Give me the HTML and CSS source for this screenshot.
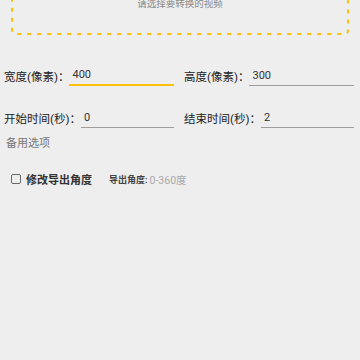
FILE: index.html
```html
<!DOCTYPE html>
<html lang="zh-CN">
<head>
    <meta charset="UTF-8">
    <meta name="viewport" content="width=device-width, initial-scale=1.0">
    <title>视频转换</title>
    <link rel="stylesheet" href="styles.css">
</head>
<body>
    <div class="picker">
        <svg class="picker-border" width="338" height="65" viewBox="0 0 338 65">
            <rect x="1" y="1" width="336" height="63" rx="3" ry="3"/>
        </svg>
        <div class="picker-text">请选择要转换的视频</div>
    </div>

    <div class="row">
        <div class="field">
            <span class="label">宽度(像素)：</span>
            <input class="input active" type="text" value="400">
        </div>
        <div class="field">
            <span class="label">高度(像素)：</span>
            <input class="input" type="text" value="300">
        </div>
    </div>

    <div class="row">
        <div class="field">
            <span class="label">开始时间(秒)：</span>
            <input class="input" type="text" value="0">
        </div>
        <div class="field">
            <span class="label">结束时间(秒)：</span>
            <input class="input" type="text" value="2">
        </div>
    </div>

    <div class="section-title">备用选项</div>

    <div class="option">
        <span class="checkbox"></span>
        <span class="option-label">修改导出角度</span>
        <span class="angle-label">导出角度:</span>
        <span class="angle-hint">0-360度</span>
    </div>
</body>
</html>
```

FILE: styles.css
```css
* {
    box-sizing: border-box;
    margin: 0;
    padding: 0;
}

body {
    background: #eeeeee;
    font-family: Roboto, "Noto Sans CJK SC", sans-serif;
    color: #333;
    width: 360px;
    height: 360px;
    overflow: hidden;
}

/* video picker, scrolled partly out of view */
.picker {
    position: relative;
    margin: -30px 11px 0;
    height: 65px;
    padding-top: 29px;
    text-align: center;
}

.picker-border {
    position: absolute;
    left: 0;
    top: 0;
}

.picker-border rect {
    fill: none;
    stroke: #ffc107;
    stroke-width: 2;
    stroke-dasharray: 4 6;
}

.picker-text {
    font-size: 9.5px;
    line-height: 10px;
    color: #888;
}

.row {
    display: flex;
    margin-top: 31px;
}

.row + .row {
    margin-top: 22px;
}

.field {
    flex: 1 1 0;
    min-width: 0;
    display: flex;
    align-items: center;
    height: 20px;
    padding: 0 6px 0 4px;
}

.label {
    font-size: 11.5px;
    color: #222;
    white-space: nowrap;
    flex: none;
}

.input {
    flex: 1 1 0;
    width: 0;
    min-width: 0;
    height: 19px;
    border: none;
    border-bottom: 1px solid #9e9e9e;
    background: transparent;
    font-family: Roboto, sans-serif;
    font-size: 11px;
    color: #333;
    padding: 0 0 1px 3px;
    outline: none;
}

.input.active {
    border-bottom: 2px solid #ffc107;
}

.section-title {
    margin: 8px 0 0 6px;
    font-size: 11px;
    line-height: 16px;
    color: #777;
}

.option {
    display: flex;
    align-items: center;
    margin: 19px 0 0 11px;
    height: 16px;
}

.checkbox {
    width: 10px;
    height: 10px;
    border: 1.5px solid #666;
    border-radius: 2px;
    margin-right: 5px;
}

.option-label {
    font-size: 11px;
    font-weight: bold;
    color: #333;
    margin-right: 17px;
}

.angle-label {
    font-size: 9px;
    font-weight: bold;
    color: #444;
}

.angle-hint {
    font-size: 10.5px;
    color: #aaa;
    margin-left: 2px;
}
```
